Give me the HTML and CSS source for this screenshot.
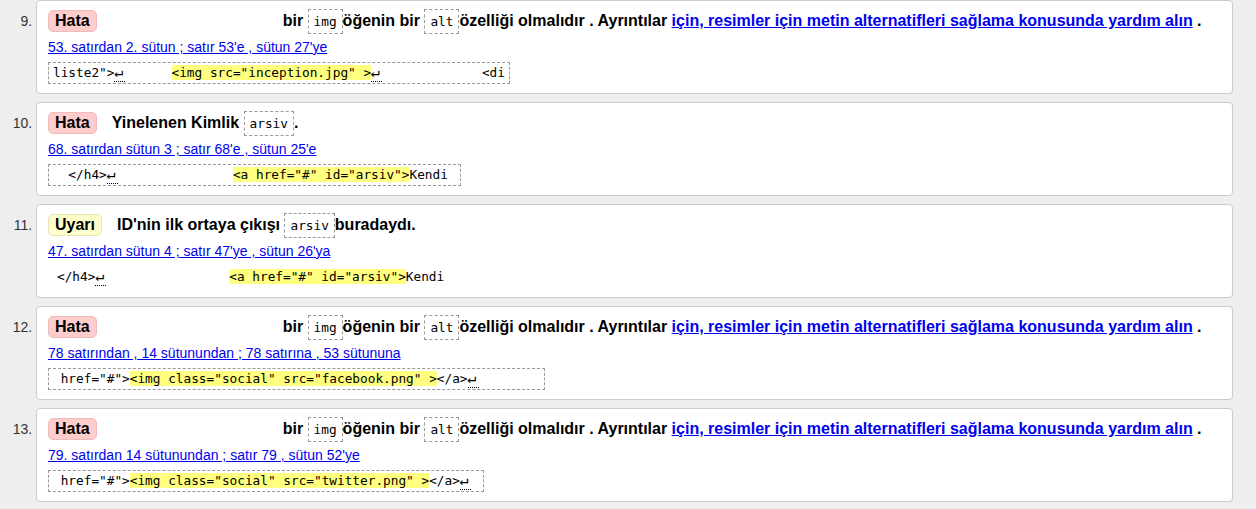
FILE: index.html
```html
<!DOCTYPE html>
<html lang="tr">
<head>
<meta charset="utf-8">
<title>Doğrulama sonuçları</title>
<link rel="stylesheet" href="styles.css">
</head>
<body>
<ol class="messages" start="9">
  <li class="msg">
    <p class="title"><span class="badge badge-error">Hata</span><span class="text text-wide">bir <code class="ref">img</code>öğenin bir <code class="ref">alt</code>özelliği olmalıdır . Ayrıntılar <a href="#">için, resimler için metin alternatifleri sağlama konusunda yardım alın</a> .</span></p>
    <p class="loc"><a href="#">53. satırdan 2. sütun ; satır 53'e , sütun 27'ye</a></p>
    <pre class="extract">liste2"&gt;<span class="lf">↵</span>      <mark>&lt;img src="inception.jpg" &gt;</mark><span class="lf">↵</span>             &lt;di</pre>
  </li>
  <li class="msg">
    <p class="title"><span class="badge badge-error">Hata</span><span class="text">Yinelenen Kimlik <code class="ref">arsiv</code>.</span></p>
    <p class="loc"><a href="#">68. satırdan sütun 3 ; satır 68'e , sütun 25'e</a></p>
    <pre class="extract">  &lt;/h4&gt;<span class="lf">↵</span>               <mark>&lt;a href="#" id="arsiv"&gt;</mark>Kendi </pre>
  </li>
  <li class="msg">
    <p class="title"><span class="badge badge-warning">Uyarı</span><span class="text">ID'nin ilk ortaya çıkışı <code class="ref">arsiv</code>buradaydı.</span></p>
    <p class="loc"><a href="#">47. satırdan sütun 4 ; satır 47'ye , sütun 26'ya</a></p>
    <pre class="extract extract-plain">&lt;/h4&gt;<span class="lf">↵</span>                <mark>&lt;a href="#" id="arsiv"&gt;</mark>Kendi</pre>
  </li>
  <li class="msg">
    <p class="title"><span class="badge badge-error">Hata</span><span class="text text-wide">bir <code class="ref">img</code>öğenin bir <code class="ref">alt</code>özelliği olmalıdır . Ayrıntılar <a href="#">için, resimler için metin alternatifleri sağlama konusunda yardım alın</a> .</span></p>
    <p class="loc"><a href="#">78 satırından , 14 sütunundan ; 78 satırına , 53 sütununa</a></p>
    <pre class="extract"> href="#"&gt;<mark>&lt;img class="social" src="facebook.png" &gt;</mark>&lt;/a&gt;<span class="lf">↵</span>        </pre>
  </li>
  <li class="msg">
    <p class="title"><span class="badge badge-error">Hata</span><span class="text text-wide">bir <code class="ref">img</code>öğenin bir <code class="ref">alt</code>özelliği olmalıdır . Ayrıntılar <a href="#">için, resimler için metin alternatifleri sağlama konusunda yardım alın</a> .</span></p>
    <p class="loc"><a href="#">79. satırdan 14 sütunundan ; satır 79 , sütun 52'ye</a></p>
    <pre class="extract"> href="#"&gt;<mark>&lt;img class="social" src="twitter.png" &gt;</mark>&lt;/a&gt;<span class="lf">↵</span> </pre>
  </li>
</ol>
</body>
</html>
```

FILE: styles.css
```css
html, body {
  margin: 0;
  padding: 0;
}

body {
  background: #eeeeee;
  font-family: "Liberation Sans", Arial, sans-serif;
  font-size: 14px;
  color: #000;
}

.messages {
  margin: 0;
  padding: 0 23px 0 36px;
  list-style: decimal outside;
}

.msg {
  background: #fff;
  border: 1px solid #cccccc;
  border-radius: 4px;
  padding: 8px 11px 9px 11px;
  margin: 0 0 8px 0;
}

.msg::marker {
  font-family: "Liberation Sans", Arial, sans-serif;
  font-size: 14px;
  color: #333;
}

.title {
  margin: 0;
  font-size: 16px;
  font-weight: bold;
  line-height: 24px;
  white-space: nowrap;
}

.badge {
  display: inline-block;
  line-height: 20px;
  padding: 0 6px;
  border: 1px solid;
  border-radius: 5px;
  color: #000;
}

.badge-error {
  background: #ffcccc;
  border-color: #eebbbb;
}

.badge-warning {
  background: #ffffcc;
  border-color: #e4e4b4;
}

.text {
  margin-left: 15px;
}

.text-wide {
  margin-left: 186px;
}

.ref {
  font-family: "DejaVu Sans Mono", "Liberation Mono", monospace;
  font-size: 12.75px;
  font-weight: normal;
  line-height: 14px;
  padding: 4px 5px;
  border: 1px dashed #999;
}

a {
  color: #0000ee;
  text-decoration: underline;
}

.loc {
  margin: 5px 0 0 0;
  line-height: 18px;
  font-size: 14px;
}

.extract {
  display: block;
  width: fit-content;
  margin: 6px 0 0 0;
  padding: 0 4px;
  border: 1px dashed #999;
  font-family: "DejaVu Sans Mono", "Liberation Mono", monospace;
  font-size: 12.75px;
  line-height: 20px;
  white-space: pre;
  color: #000;
}

.extract-plain {
  border-color: transparent;
  padding-left: 8px;
}

.extract mark {
  background: #ffff80;
  color: #000;
}

.lf {
  font-size: 15px;
  line-height: 14px;
  padding-right: 2px;
  border-bottom: 1px dotted #000;
}
```
